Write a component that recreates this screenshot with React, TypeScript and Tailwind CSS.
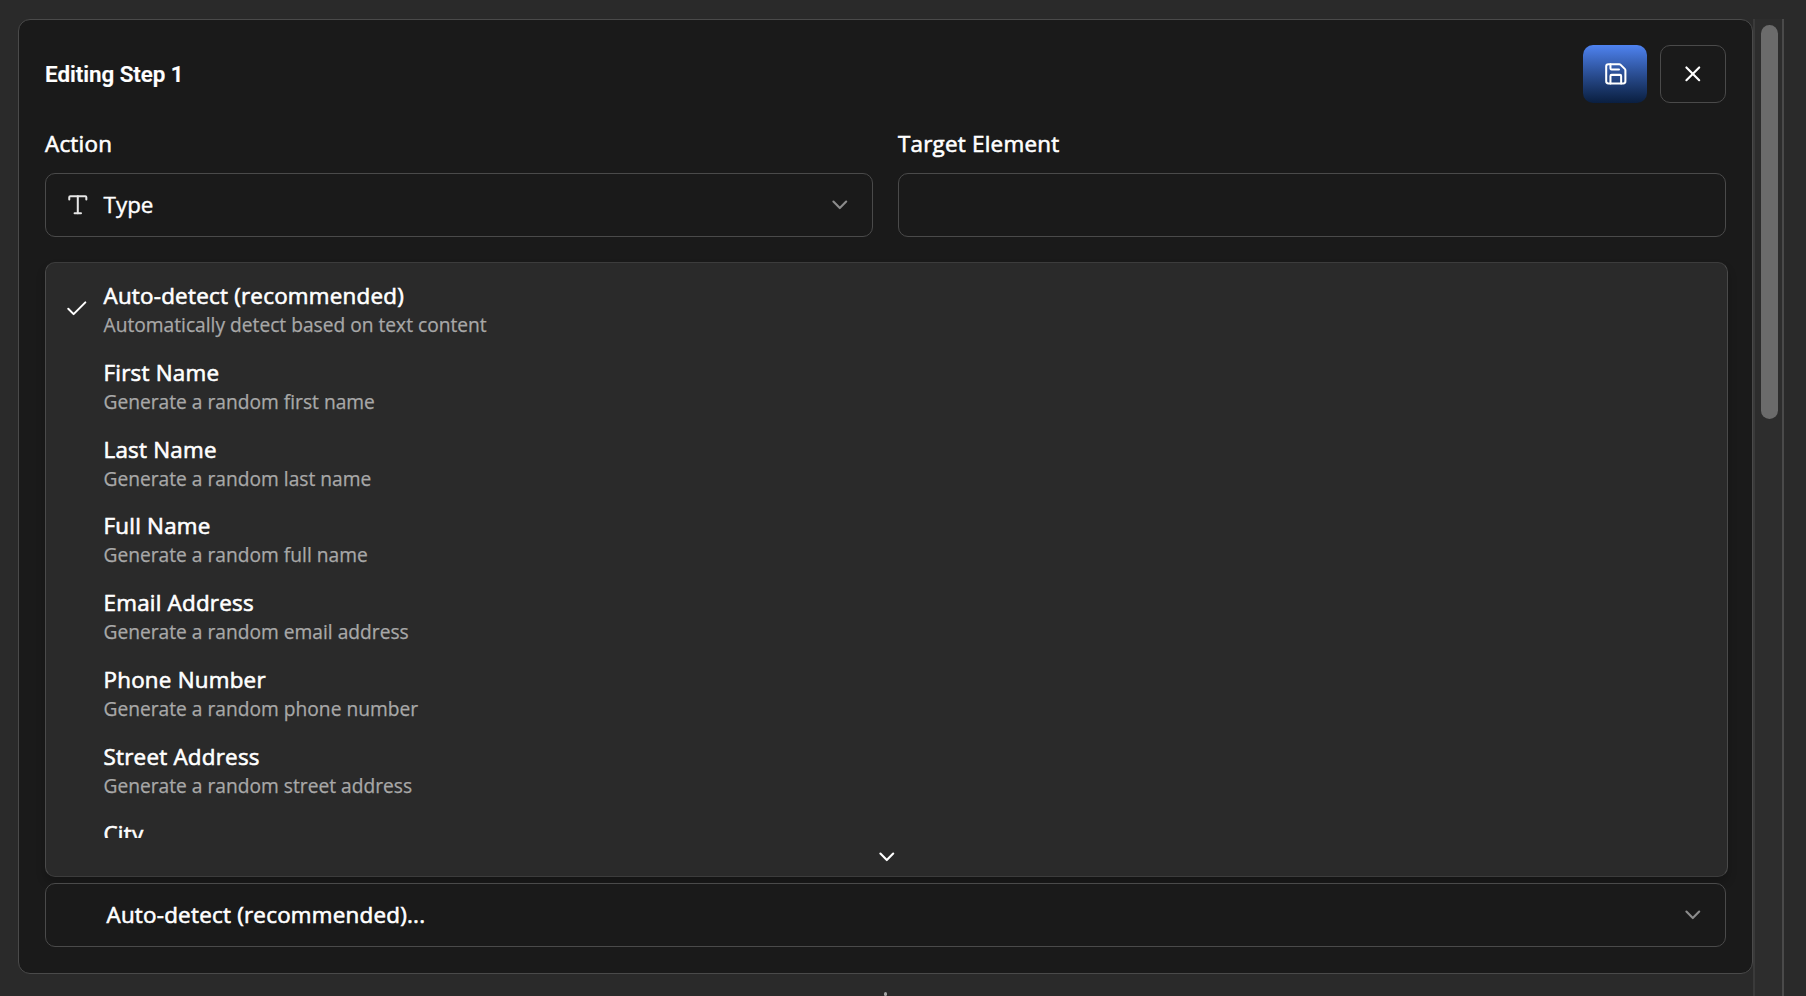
import { Check, ChevronDown, Save, Type, X } from "lucide-react";

const options = [
  { name: "Auto-detect (recommended)", hint: "Automatically detect based on text content", selected: true },
  { name: "First Name", hint: "Generate a random first name" },
  { name: "Last Name", hint: "Generate a random last name" },
  { name: "Full Name", hint: "Generate a random full name" },
  { name: "Email Address", hint: "Generate a random email address" },
  { name: "Phone Number", hint: "Generate a random phone number" },
  { name: "Street Address", hint: "Generate a random street address" },
  { name: "City" },
];

const medium = "text-[22.4px] leading-8 font-medium tracking-[0.23px] [-webkit-text-stroke:0.6px_currentColor]";

function Option({ name, hint, selected }: { name: string; hint?: string; selected?: boolean }) {
  return (
    <li className="flex h-[76.8px] shrink-0">
      <span className="flex w-[57.5px] shrink-0 items-center pl-[18px]">
        {selected && <Check className="size-[25.6px]" strokeWidth={1.9} />}
      </span>
      <span className="flex flex-col pt-[9.6px]">
        <span className={medium}>{name}</span>
        {hint && (
          <span className="text-[19.2px] leading-[25.6px] text-[#a8a8a8] [-webkit-text-stroke:0.25px_currentColor]">{hint}</span>
        )}
      </span>
    </li>
  );
}

export default function App() {
  return (
    <div className="flex h-[996px] w-[1806px] overflow-hidden bg-[#2a2a2a] pt-[19px] pl-[18px] font-['Open_Sans','Noto_Sans',sans-serif] text-white">
      <main className="flex w-[1735px] shrink-0 flex-col">
        <section className="flex h-[955px] shrink-0 flex-col rounded-xl border border-[#4a4a4a] bg-[#1a1a1a] px-[26px] pt-[25px]">
          <header className="flex h-[58px] shrink-0 items-center justify-between">
            <h1 className="pt-[2px] font-['Roboto',sans-serif] text-[22.4px] font-semibold tracking-[-0.04px] [-webkit-text-stroke:0.2px_currentColor]">Editing Step 1</h1>
            <div className="flex gap-[13px]">
              <button aria-label="Save" className="flex h-[58px] w-16 items-center justify-center rounded-[10px] bg-linear-to-b from-[#4f83f1] to-[#0a1f40] pl-[2px]">
                <Save className="size-[25.6px]" strokeWidth={1.9} />
              </button>
              <button aria-label="Close" className="flex h-[58px] w-[66px] items-center justify-center rounded-[10px] border border-[#4a4a4a]">
                <X className="size-[25.6px]" />
              </button>
            </div>
          </header>

          <div className="mt-[25px] grid shrink-0 grid-cols-2 gap-[25px]">
            <div className="flex flex-col">
              <label className={`h-[45px] ${medium}`}>Action</label>
              <button className="flex h-16 items-center rounded-[10px] border border-[#4a4a4a] pr-[19px] pl-[19px]">
                <Type className="size-[25.6px] text-[#e6e6e6]" strokeWidth={1.9} />
                <span className="ml-[13px] text-[22.4px] [-webkit-text-stroke:0.4px_currentColor]">Type</span>
                <ChevronDown className="ml-auto size-[25.6px] text-[#8c8c8c]" />
              </button>
            </div>
            <div className="flex flex-col">
              <label className={`h-[45px] ${medium}`}>Target Element</label>
              <input aria-label="Target Element" className="h-16 rounded-[10px] border border-[#4a4a4a] bg-transparent px-5 outline-none" />
            </div>
          </div>

          <div className="mt-[25px] -mr-[2px] flex h-[615px] shrink-0 flex-col rounded-[10px] border border-x-[#4a4a4a] border-y-[#3c3c3c] bg-[#2a2a2a] pt-[7.4px] shadow-[0_6px_10px_rgba(0,0,0,0.2)]">
            <ul className="flex h-[567.6px] flex-col overflow-hidden">
              {options.map((option) => (
                <Option key={option.name} {...option} />
              ))}
            </ul>
            <div className="flex h-9 items-center justify-center pt-[2px]">
              <ChevronDown className="size-[25.6px]" />
            </div>
          </div>

          <button className="mt-[6px] flex h-16 shrink-0 items-center rounded-[10px] border border-[#4a4a4a] bg-[#1a1a1a] pr-[19px] pl-[60.5px]">
            <span className={medium}>Auto-detect (recommended)...</span>
            <ChevronDown className="ml-auto size-[25.6px] text-[#8c8c8c]" />
          </button>
        </section>
        <span className="mt-[18px] h-10 w-[3px] self-center rounded-full bg-[#a6a6a6]" />
      </main>
      <div className="flex h-[977px] w-[31px] shrink-0 border-r-2 border-l-2 border-r-[#4a4a4a] border-l-[#3a3a3a] bg-[#2d2d2d] pt-[6px] pl-[6px]">
        <div className="h-[394px] w-[17px] rounded-full bg-[#6b6b6b]" />
      </div>
    </div>
  );
}
